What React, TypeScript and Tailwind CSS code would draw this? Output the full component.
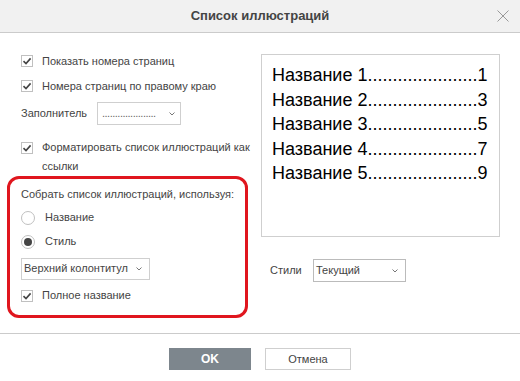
import React from "react";

const font = { fontFamily: '"Liberation Sans", Arial, sans-serif' };

function Check() {
  return (
    <span className="w-[12px] h-[12px] border border-[#c0c0c0] bg-white flex items-center justify-center shrink-0">
      <svg width="10" height="10" viewBox="0 0 10 10">
        <path d="M1.5 5.2 L4 7.6 L8.6 2.4" fill="none" stroke="#444" strokeWidth="1.6" />
      </svg>
    </span>
  );
}

function Radio({ on }: { on?: boolean }) {
  return (
    <span className="w-[14px] h-[14px] rounded-full border border-[#c0c0c0] bg-white flex items-center justify-center shrink-0">
      {on && <span className="w-[8px] h-[8px] rounded-full bg-[#444]" />}
    </span>
  );
}

function Chevron() {
  return (
    <svg width="8" height="6" viewBox="0 0 8 6">
      <path d="M1.5 1.5 L4 4 L6.5 1.5" fill="none" stroke="#777" strokeWidth="1" />
    </svg>
  );
}

export default function App() {
  return (
    <div style={font} className="w-[520px] h-[381px] bg-white text-[#444] text-[11px] flex flex-col relative overflow-hidden">
      <div className="h-[33px] bg-[#f1f1f1] border-b border-[#cbcbcb] flex items-center justify-center relative shrink-0">
        <span className="text-[13px] font-bold text-[#444]">Список иллюстраций</span>
        <svg className="absolute right-[10px] top-[9px]" width="14" height="14" viewBox="0 0 14 14">
          <path d="M1.5 1.5 L12.5 12.5 M12.5 1.5 L1.5 12.5" stroke="#999" strokeWidth="1" />
        </svg>
      </div>
      <div className="flex-1 flex px-[7px] pt-[22px]">
        <div className="w-[242px] flex flex-col">
          <div className="pl-[14px] flex flex-col">
            <div className="flex items-center gap-[9px] h-[12px]">
              <Check />
              <span>Показать номера страниц</span>
            </div>
            <div className="flex items-center gap-[9px] h-[12px] mt-[13px]">
              <Check />
              <span>Номера страниц по правому краю</span>
            </div>
            <div className="flex items-center mt-[10px] h-[23px]">
              <span className="w-[76px]">Заполнитель</span>
              <div className="w-[84px] h-[23px] border border-[#cfcfcf] flex items-center justify-between px-[4px]">
                <span className="text-[#666] tracking-[-0.5px]">.....................</span>
                <Chevron />
              </div>
            </div>
            <div className="flex items-start gap-[9px] mt-[16px]">
              <div className="mt-[1px]"><Check /></div>
              <span className="leading-[19px] -mt-[3px] w-[222px] shrink-0">Форматировать список иллюстраций как ссылки</span>
            </div>
          </div>
          <div className="mt-0 ml-0 w-[241px] h-[142px] border-[3px] border-[#e0161e] rounded-[12px] pl-[11px] pt-[7px] flex flex-col">
            <span>Собрать список иллюстраций, используя:</span>
            <div className="flex items-center gap-[10px] mt-[8px] h-[14px]">
              <Radio />
              <span>Название</span>
            </div>
            <div className="flex items-center gap-[10px] mt-[10px] h-[14px]">
              <Radio on />
              <span>Стиль</span>
            </div>
            <div className="w-[129px] h-[22px] border border-[#cfcfcf] flex items-center justify-between pl-[2px] pr-[6px] mt-[9px]">
              <span>Верхний колонтитул</span>
              <Chevron />
            </div>
            <div className="flex items-center gap-[9px] h-[12px] mt-[10px]">
              <Check />
              <span>Полное название</span>
            </div>
          </div>
        </div>
        <div className="flex flex-col ml-[12px]">
          <div className="w-[239px] h-[183px] border border-[#cfcfcf] pl-[10px] pt-[8px] text-black text-[18px] leading-[24.5px] -mt-[1px]">
            <div>Название 1......................1</div>
            <div>Название 2......................3</div>
            <div>Название 3......................5</div>
            <div>Название 4......................7</div>
            <div>Название 5......................9</div>
          </div>
          <div className="flex items-center mt-[22px] pl-[9px]">
            <span className="w-[43px]">Стили</span>
            <div className="w-[93px] h-[23px] border border-[#bbb] flex items-center justify-between pl-[2px] pr-[6px]">
              <span>Текущий</span>
              <Chevron />
            </div>
          </div>
        </div>
      </div>
      <div className="h-[48px] border-t border-[#cbcbcb] flex items-start justify-center gap-[14px] pt-[14px] shrink-0">
        <button className="w-[82px] h-[22px] bg-[#7d868d] text-white font-bold text-[12px]">OK</button>
        <button className="w-[86px] h-[22px] bg-white border border-[#cfcfcf] text-[#444] text-[11px]">Отмена</button>
      </div>
    </div>
  );
}
